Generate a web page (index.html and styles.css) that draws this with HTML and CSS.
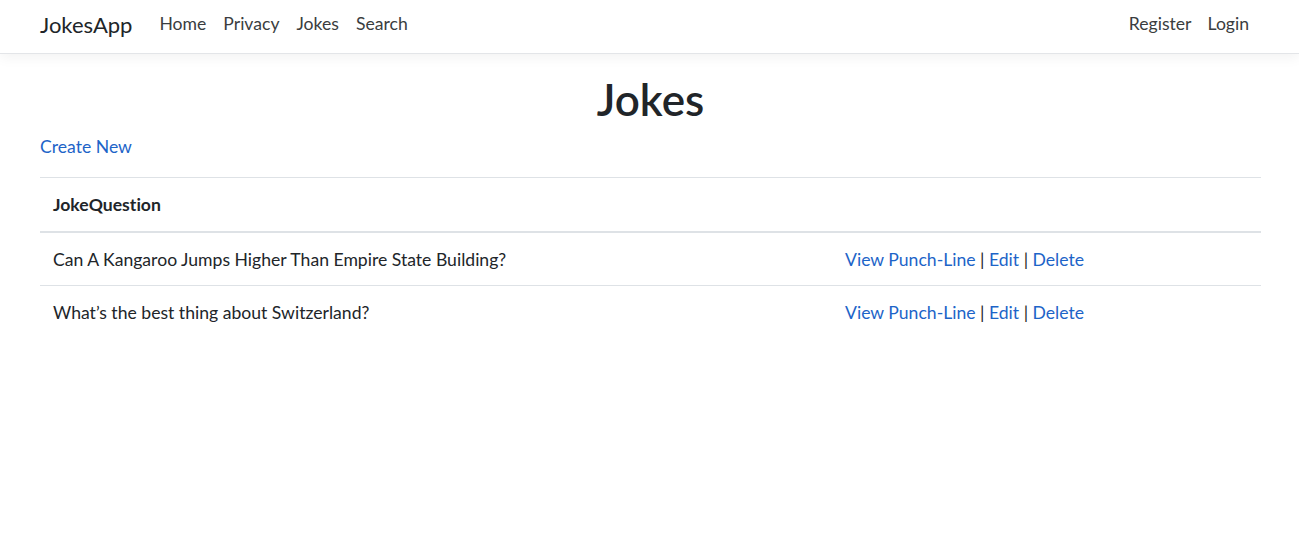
FILE: index.html
```html
<!DOCTYPE html>
<html lang="en">
<head>
<meta charset="utf-8">
<title>Jokes - JokesApp</title>
<link rel="stylesheet" href="styles.css">
</head>
<body>
<header class="navbar">
  <div class="nav-inner">
    <a class="brand" href="#">JokesApp</a>
    <nav class="nav-left">
      <a class="nav-link" href="#">Home</a>
      <a class="nav-link" href="#">Privacy</a>
      <a class="nav-link" href="#">Jokes</a>
      <a class="nav-link" href="#">Search</a>
    </nav>
    <nav class="nav-right">
      <a class="nav-link" href="#">Register</a>
      <a class="nav-link" href="#">Login</a>
    </nav>
  </div>
</header>
<main class="container">
  <h1 class="title">Jokes</h1>
  <p class="create"><a href="#">Create New</a></p>
  <table class="table">
    <thead>
      <tr><th>JokeQuestion</th><th class="actions"></th></tr>
    </thead>
    <tbody>
      <tr>
        <td>Can A Kangaroo Jumps Higher Than Empire State Building?</td>
        <td class="actions"><a href="#">View Punch-Line</a> | <a href="#">Edit</a> | <a href="#">Delete</a></td>
      </tr>
      <tr class="last">
        <td>What’s the best thing about Switzerland?</td>
        <td class="actions"><a href="#">View Punch-Line</a> | <a href="#">Edit</a> | <a href="#">Delete</a></td>
      </tr>
    </tbody>
  </table>
</main>
</body>
</html>
```

FILE: styles.css
```css
* { box-sizing: border-box; }
html, body { margin: 0; padding: 0; background: #fff; }
body {
  font-family: "Lato", "Noto Sans", sans-serif;
  font-size: 17.6px;
  line-height: 1.5;
  color: #212529;
  font-variant-ligatures: no-common-ligatures;
}
a { color: #1d64c8; text-decoration: none; }

.navbar {
  height: 54px;
  border-bottom: 1px solid #e3e5e8;
  box-shadow: 0 4px 12px rgba(0,0,0,0.05);
  background: #fff;
}
.nav-inner {
  height: 49px;
  display: flex;
  align-items: center;
  padding: 0 40px;
}
.brand {
  font-size: 22px;
  color: #212529;
  margin-right: 27px;
}
.nav-left, .nav-right { display: flex; gap: 17px; }
.nav-right { margin-left: auto; margin-right: 10px; gap: 16px; }
.nav-link { color: #3a3d40; font-size: 17.6px; }

.container { padding: 0 38px 0 40px; }
.title {
  text-align: center;
  font-size: 44px;
  font-weight: 600;
  line-height: 1.2;
  margin: 19px 0 8px;
}
.create { margin: 0 0 17px; }

.table { width: 100%; border-collapse: collapse; }
.table th, .table td {
  text-align: left;
  padding: 14px 13px 12px;
  border-top: 1px solid #dee2e6;
  vertical-align: top;
}
.table th { font-weight: 700; }
.table thead th { border-bottom: 2px solid #dee2e6; }
.table tr.last td { border-bottom: none; }
.actions { width: 429px; color: #212529; }
```
